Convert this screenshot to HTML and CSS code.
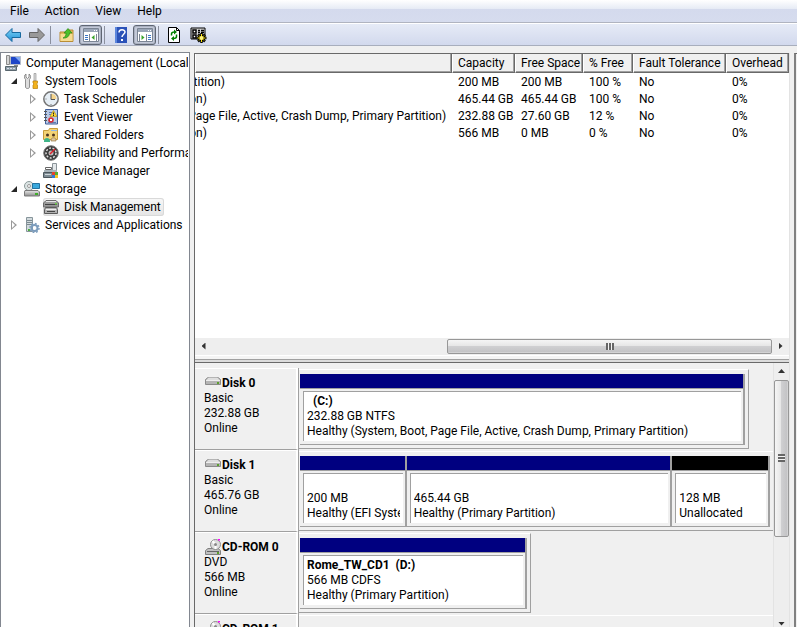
FILE: index.html
```
<!DOCTYPE html>
<html lang="en">

<head>
    <meta charset="UTF-8">
    <meta name="viewport" content="width=device-width, initial-scale=1.0">
    <title>Computer Management</title>
    <link rel="stylesheet" href="styles.css">
</head>

<body>
    <!-- shared icons -->
    <svg class="defs" width="0" height="0">
        <defs>
            <linearGradient id="blue" x1="0" y1="0" x2="0" y2="1">
                <stop offset="0" stop-color="#7fd4f7" />
                <stop offset="1" stop-color="#1f8fd6" />
            </linearGradient>
            <linearGradient id="metal" x1="0" y1="0" x2="0" y2="1">
                <stop offset="0" stop-color="#e8e8e8" />
                <stop offset="1" stop-color="#8c8c8c" />
            </linearGradient>
            <symbol id="hdd" viewBox="0 0 16 16">
                <path d="M3 2.500h10l2.500 2v5h-15v-5z" fill="#b4b4b4" stroke="#8a8a8a" />
                <path d="M3.500 2.500h9l2 2.500h-13z" fill="#dedede" />
                <path d="M1 5.500h14" stroke="#eee" />
                <path d="M12 7h2v2h-2z" fill="#5aa02c" />
            </symbol>
            <symbol id="cdrom" viewBox="0 0 16 16">
                <path d="M3 9.500h10l2.500 2v4h-15v-4z" fill="#c0c0c0" stroke="#808080" />
                <path d="M2 12.500h12" stroke="#666" />
                <circle cx="10.500" cy="5.500" r="5" fill="#ddd" stroke="#8c8c8c" />
                <path d="M10.500 5.500l-3-3.500M10.500 5.500v4.500" stroke="#fff" stroke-width="2" />
                <circle cx="10.500" cy="5.500" r="1.500" fill="#888" />
                <path d="M13 0h2v1.500h-2z" fill="#f0f" />
                <path d="M12 13h2v2h-2z" fill="#5aa02c" />
            </symbol>
        </defs>
    </svg>

    <nav class="menubar">
        <button>File</button>
        <button>Action</button>
        <button>View</button>
        <button>Help</button>
    </nav>

    <div class="toolbar">
        <button aria-label="Back">
            <svg width="16" height="16" viewBox="0 0 16 16"><path d="M.5 8L7 1.500v4h8.500v5H7v4z" fill="url(#blue)" stroke="#17699f" /></svg>
        </button>
        <button aria-label="Forward">
            <svg width="16" height="16" viewBox="0 0 16 16"><path d="M15.500 8L9 1.500v4H.5v5H9v4z" fill="#999" stroke="#666" /></svg>
        </button>
        <span class="sep"></span>
        <button aria-label="Up one level">
            <svg width="16" height="16" viewBox="0 0 16 16">
                <path d="M1 5h6l1-2h6v11.500H1z" fill="#e3bb63" stroke="#b98d35" />
                <path d="M1.500 7h12v7h-12z" fill="#f6dc92" />
                <path d="M4 11c2.500-1 3-2.500 3-5H5L9 1.500 13 6h-2.500C10.500 9 8 11.500 4 11z" fill="#4cc02c" stroke="#2a8a16" stroke-width=".7" />
            </svg>
        </button>
        <button class="pressed" aria-label="Show console tree">
            <svg width="16" height="16" viewBox="0 0 16 16">
                <path d="M.5 1.500h15v13H.5z" fill="#fff" stroke="#7b8594" />
                <path d="M1 2h14v3H1z" fill="#9aa6b8" />
                <path d="M11 3.500h1M13 3.500h1M1 6.500h14" stroke="#fff" />
                <path d="M2 8.500h3M2 10.500h3M2 12.500h3" stroke="#3c78c8" />
                <path d="M6.500 7v7M13.500 7v7" stroke="#7b8594" />
                <path d="M11.500 8v5L8.500 10.500z" fill="#3aa52a" />
            </svg>
        </button>
        <span class="sep"></span>
        <button aria-label="Help">
            <svg width="16" height="16" viewBox="0 0 16 16">
                <path d="M2 0h12v16H2z" fill="#2b52b8" />
                <path d="M2 0h2v16H2z" fill="#5c86dc" />
                <path d="M6 5.500C6 1.800 12 2 12 5c0 2-3 2.500-3 5" fill="none" stroke="#fff" stroke-width="1.500" />
                <path d="M8 12h2v2H8z" fill="#fff" />
            </svg>
        </button>
        <button class="pressed" aria-label="Show action pane">
            <svg width="16" height="16" viewBox="0 0 16 16">
                <path d="M.5 1.500h15v13H.5z" fill="#fff" stroke="#7b8594" />
                <path d="M1 2h14v3H1z" fill="#9aa6b8" />
                <path d="M11 3.500h1M13 3.500h1M1 6.500h14" stroke="#fff" />
                <path d="M11 8.500h3M11 10.500h3M11 12.500h3" stroke="#3c78c8" />
                <path d="M9.500 7v7M2.500 7v7" stroke="#7b8594" />
                <path d="M4.500 8v5l3-2.500z" fill="#3aa52a" />
            </svg>
        </button>
        <span class="sep"></span>
        <button aria-label="Refresh">
            <svg width="16" height="16" viewBox="0 0 16 16">
                <path d="M1.500.5h8l3 3v12h-11z" fill="#fff" stroke="#000" />
                <path d="M9.500.5v3h3" fill="none" stroke="#000" />
                <path d="M4.500 8.500V7c0-1 1-2 3-2M9.500 7.500V9.500c0 1-1 2-3 2" fill="none" stroke="#008000" stroke-width="1.500" />
                <path d="M7 2.500v5L10 5zM7 9v5l-3-2.500z" fill="#008000" />
            </svg>
        </button>
        <button aria-label="Properties">
            <svg width="17" height="16" viewBox="0 0 17 16">
                <path d="M1 1h14v11H1z" fill="#d8d8d8" stroke="#000" />
                <path d="M3 3h3v3H3zM3 8h3v3H3z" fill="#fff" stroke="#000" stroke-width="1.500" />
                <path d="M8 3.500h2M11 3.500h3M8 5.500h2M11 5.500h3M8 8.500h2" stroke="#000" stroke-width="1.500" />
                <path d="M11.500 6v10M6.500 11h10M8 7.500l7 7M15 7.500l-7 7" stroke="#000" stroke-width="2.500" />
                <path d="M11.500 7v8M7.500 11h8M9 8.500l5 5M14 8.500l-5 5" stroke="#ffe600" />
                <circle cx="11.500" cy="11" r="2" fill="#fff27a" />
            </svg>
        </button>
    </div>

    <main class="workspace">
        <aside class="tree">
            <ul>
                <li class="node root">
                    <svg width="16" height="16" viewBox="0 0 16 16">
                        <path d="M5.500 1.500h10v8h-10z" fill="#1e46c8" stroke="#b4bccb" />
                        <path d="M10 2h5v5z" fill="#7fa8f2" />
                        <path d="M9 10h4v2H9z" fill="#8c8c8c" />
                        <path d="M1.500.5h3v9h-3z" fill="#d4d4d4" stroke="#8a8a8a" />
                        <path d="M.5 11.500h11v4H.5z" fill="#8fa0a8" stroke="#59666e" />
                        <path d="M2 13.500h8" stroke="#dde" stroke-dasharray="2 1" />
                    </svg>
                    <span>Computer Management (Local</span>
                </li>
                <li class="node level1">
                    <button class="twisty open" aria-label="Collapse"></button>
                    <svg width="16" height="16" viewBox="0 0 16 16">
                        <path d="M2 1v3l1.500 1.500L5 4V1c2 1 2 4 .5 5.500V14c0 2-4 2-4 0V6.500C0 5 0 2 2 1z" fill="#ddd" stroke="#777" stroke-width=".8" />
                        <path d="M10 .5h2V8h-2z" fill="#ddd" stroke="#888" stroke-width=".6" />
                        <path d="M9 8h4.500v2l-1 1 1 1v3.500H9V12l1-1-1-1z" fill="#f2b21c" stroke="#b9800a" stroke-width=".7" />
                    </svg>
                    <span>System Tools</span>
                </li>
                <li class="node level2">
                    <button class="twisty" aria-label="Expand"></button>
                    <svg width="16" height="16" viewBox="0 0 16 16">
                        <circle cx="8" cy="8" r="7.200" fill="#e6eef5" stroke="#747474" stroke-width="1.500" />
                        <path d="M8 8V2.500A5.500 5.500 0 0 1 13.500 8z" fill="#f5d48c" />
                        <path d="M8 3v5.500h4" fill="none" stroke="#555" />
                        <path d="M8 13v1M2.500 8h1" stroke="#777" />
                    </svg>
                    <span>Task Scheduler</span>
                </li>
                <li class="node level2">
                    <button class="twisty" aria-label="Expand"></button>
                    <svg width="16" height="16" viewBox="0 0 16 16">
                        <path d="M2.500.5h12v14.500h-12z" fill="#b8c8e4" stroke="#3f5f9a" />
                        <path d="M1 2.500h3M1 5.500h3M1 8.500h3M1 11.500h3" stroke="#555" />
                        <path d="M6 3.500h3M6 5.500h2M5 13.500h8" stroke="#5c7cb4" />
                        <path d="M10.500 1.500l3.500 6h-7z" fill="#ffd832" stroke="#b08a00" stroke-width=".6" />
                        <path d="M10.500 3.500v2M10.500 6v1" stroke="#222" />
                        <circle cx="8" cy="11" r="2.800" fill="#d9303a" />
                        <path d="M7 10l2 2M9 10l-2 2" stroke="#fff" />
                    </svg>
                    <span>Event Viewer</span>
                </li>
                <li class="node level2">
                    <button class="twisty" aria-label="Expand"></button>
                    <svg width="16" height="16" viewBox="0 0 16 16">
                        <path d="M.5 3.500h5l1-2h8v11H.5z" fill="#f3d375" stroke="#c79c3b" />
                        <path d="M8 3.500h6" stroke="#8fb8e8" />
                        <path d="M3 8a1.500 1.500 0 1 1 3 0 1.500 1.500 0 1 1-3 0M9 8a1.500 1.500 0 1 1 3 0 1.500 1.500 0 1 1-3 0" fill="#4a3320" />
                        <path d="M1 14c0-4 6-4 6 0v1H1z" fill="#3fb488" />
                        <path d="M8 13c0-3 5-3 5 0v1H8z" fill="#e0c8a0" stroke="#8a6a30" stroke-width=".6" />
                    </svg>
                    <span>Shared Folders</span>
                </li>
                <li class="node level2">
                    <button class="twisty" aria-label="Expand"></button>
                    <svg width="16" height="16" viewBox="0 0 16 16">
                        <circle cx="8" cy="8" r="7.300" fill="#3a3a3a" stroke="#777" />
                        <circle cx="8" cy="8" r="5" fill="none" stroke="#ddd" stroke-width="1.500" stroke-dasharray="2 1.500" />
                        <circle cx="8" cy="8" r="2.500" fill="#bbb" />
                        <path d="M7 9l5-5" stroke="#e0202a" stroke-width="1.500" />
                    </svg>
                    <span>Reliability and Performa</span>
                </li>
                <li class="node level2">
                    <span class="twisty none"></span>
                    <svg width="16" height="16" viewBox="0 0 16 16">
                        <path d="M9.500.5h4v7h-4z" fill="#e4e8ea" stroke="#8b9499" />
                        <path d="M2.500 6.500h6v-2h-6z" fill="none" stroke="#666" />
                        <path d="M1 7h13v3H1z" fill="#a9b4ba" />
                        <path d="M.5 9.500h14v5H.5z" fill="#7d8b93" stroke="#4d585e" />
                        <path d="M2 11.500h6" stroke="#cfd6da" />
                        <path d="M9 9h3v3H9z" fill="#e8432c" />
                        <path d="M12 9h3v3h-3z" fill="#54b030" />
                        <path d="M9 12h3v3H9z" fill="#2f78d8" />
                        <path d="M12 12h3v3h-3z" fill="#f6c523" />
                    </svg>
                    <span>Device Manager</span>
                </li>
                <li class="node level1">
                    <button class="twisty open" aria-label="Collapse"></button>
                    <svg width="16" height="16" viewBox="0 0 16 16">
                        <circle cx="5" cy="5" r="4.500" fill="#dce4e4" stroke="#8c9a9a" />
                        <circle cx="5" cy="5" r="1.500" fill="#fff" stroke="#999" />
                        <path d="M8.500 2.500h7v5h-7z" fill="#39a8dc" stroke="#2472a0" />
                        <path d="M1 9.500h13l1.500 1.500v4H.5v-4z" fill="url(#metal)" stroke="#7a7a7a" />
                        <path d="M11 12h3v2h-3z" fill="#3fae2a" />
                    </svg>
                    <span>Storage</span>
                </li>
                <li class="node level2 selected">
                    <span class="twisty none"></span>
                    <a href="#disk-management">
                        <svg width="16" height="16" viewBox="0 0 16 16">
                            <path d="M3 1.500h10l2.500 2.500v4h-15V4z" fill="#9a9a9a" stroke="#6a6a6a" />
                            <path d="M3 2.500h10" stroke="#e4e4e4" />
                            <path d="M2 5.500h12" stroke="#444" />
                            <path d="M12 4h2v1.500h-2z" fill="#6fd04a" />
                            <path d="M2.500 8.500h11l1 2v4h-13v-4z" fill="#b0b0b0" stroke="#5a5a5a" />
                            <path d="M3 10.500h10" stroke="#f0f0f0" />
                            <path d="M4 12.500h8" stroke="#444" />
                        </svg>
                        <span>Disk Management</span>
                    </a>
                </li>
                <li class="node level1">
                    <button class="twisty" aria-label="Expand"></button>
                    <svg width="16" height="16" viewBox="0 0 16 16">
                        <path d="M2.500.5h6v14h-6z" fill="#d2dadd" stroke="#87959b" />
                        <path d="M3 3.500h5M3 5.500h5M3 7.500h5" stroke="#7c8a91" />
                        <path d="M4 12h2v2H4z" fill="#4cae3a" />
                        <circle cx="10.500" cy="11" r="3" fill="none" stroke="#7c9cbc" stroke-width="2" />
                        <circle cx="10.500" cy="11" r="4.500" fill="none" stroke="#7c9cbc" stroke-width="1.500" stroke-dasharray="1.800 1.700" />
                    </svg>
                    <span>Services and Applications</span>
                </li>
            </ul>
        </aside>

        <section class="content" id="disk-management">
            <div class="volumes">
                <table>
                    <colgroup>
                        <col>
                        <col class="w63">
                        <col class="w68">
                        <col class="w50">
                        <col class="w93">
                        <col class="w63">
                    </colgroup>
                    <thead>
                        <tr>
                            <th></th>
                            <th>Capacity</th>
                            <th>Free Space</th>
                            <th>% Free</th>
                            <th>Fault Tolerance</th>
                            <th>Overhead</th>
                        </tr>
                    </thead>
                    <tbody>
                        <tr>
                            <td><span>Healthy (EFI System Partition)</span></td>
                            <td>200 MB</td>
                            <td>200 MB</td>
                            <td>100 %</td>
                            <td>No</td>
                            <td>0%</td>
                        </tr>
                        <tr>
                            <td><span>Healthy (Primary Partition)</span></td>
                            <td>465.44 GB</td>
                            <td>465.44 GB</td>
                            <td>100 %</td>
                            <td>No</td>
                            <td>0%</td>
                        </tr>
                        <tr>
                            <td><span>Healthy (System, Boot, Page File, Active, Crash Dump, Primary Partition)</span></td>
                            <td>232.88 GB</td>
                            <td>27.60 GB</td>
                            <td>12 %</td>
                            <td>No</td>
                            <td>0%</td>
                        </tr>
                        <tr>
                            <td><span>Healthy (Primary Partition)</span></td>
                            <td>566 MB</td>
                            <td>0 MB</td>
                            <td>0 %</td>
                            <td>No</td>
                            <td>0%</td>
                        </tr>
                    </tbody>
                </table>
                <div class="scrollbar horizontal">
                    <button aria-label="Scroll left"><i class="arrow left"></i></button>
                    <div class="track">
                        <div class="thumb"><i class="grip"></i></div>
                    </div>
                    <button aria-label="Scroll right"><i class="arrow right"></i></button>
                </div>
            </div>

            <div class="disks">
                <div class="disk-list">
                    <div class="disk">
                        <div class="disk-label">
                            <h2><svg width="16" height="16"><use href="#hdd" /></svg>Disk 0</h2>
                            <p>Basic</p>
                            <p>232.88 GB</p>
                            <p>Online</p>
                        </div>
                        <div class="disk-area">
                            <div class="frame" style="width: 95%">
                                <div class="partition" style="flex-grow: 1">
                                    <div class="info">
                                        <h3>&nbsp; (C:)</h3>
                                        <p>232.88 GB NTFS</p>
                                        <p>Healthy (System, Boot, Page File, Active, Crash Dump, Primary Partition)</p>
                                    </div>
                                </div>
                            </div>
                        </div>
                    </div>
                    <div class="disk">
                        <div class="disk-label">
                            <h2><svg width="16" height="16"><use href="#hdd" /></svg>Disk 1</h2>
                            <p>Basic</p>
                            <p>465.76 GB</p>
                            <p>Online</p>
                        </div>
                        <div class="disk-area">
                            <div class="frame full">
                                <div class="partition" style="flex-grow: 106">
                                    <div class="info">
                                        <h3></h3>
                                        <p>200 MB</p>
                                        <p>Healthy (EFI System Partition)</p>
                                    </div>
                                </div>
                                <div class="partition" style="flex-grow: 267">
                                    <div class="info">
                                        <h3></h3>
                                        <p>465.44 GB</p>
                                        <p>Healthy (Primary Partition)</p>
                                    </div>
                                </div>
                                <div class="partition unallocated" style="flex-grow: 97">
                                    <div class="info">
                                        <h3></h3>
                                        <p>128 MB</p>
                                        <p>Unallocated</p>
                                    </div>
                                </div>
                            </div>
                        </div>
                    </div>
                    <div class="disk">
                        <div class="disk-label">
                            <h2><svg width="16" height="16"><use href="#cdrom" /></svg>CD-ROM 0</h2>
                            <p>DVD</p>
                            <p>566 MB</p>
                            <p>Online</p>
                        </div>
                        <div class="disk-area">
                            <div class="frame" style="width: 49%">
                                <div class="partition" style="flex-grow: 1">
                                    <div class="info">
                                        <h3>Rome_TW_CD1 &nbsp;(D:)</h3>
                                        <p>566 MB CDFS</p>
                                        <p>Healthy (Primary Partition)</p>
                                    </div>
                                </div>
                            </div>
                        </div>
                    </div>
                    <div class="disk">
                        <div class="disk-label">
                            <h2><svg width="16" height="16"><use href="#cdrom" /></svg>CD-ROM 1</h2>
                        </div>
                        <div class="disk-area">
                            <div class="frame full"></div>
                        </div>
                    </div>
                </div>
                <div class="scrollbar vertical">
                    <button aria-label="Scroll up"><i class="arrow up"></i></button>
                    <div class="track">
                        <div class="thumb"><i class="grip"></i></div>
                    </div>
                    <button aria-label="Scroll down"><i class="arrow down"></i></button>
                </div>
            </div>
        </section>

        <aside class="actions"></aside>
    </main>
</body>

</html>
```
FILE: styles.css
```
* {
    margin: 0;
    padding: 0;
    box-sizing: border-box;
}

body {
    display: flex;
    flex-direction: column;
    height: 100vh;
    overflow: hidden;
    background-color: #f0f0f0;
    color: #000;
    font-family: Roboto, sans-serif;
    font-size: 12px;
    line-height: 15px;
}

button {
    border: none;
    background: none;
    font: inherit;
    color: inherit;
}

ul {
    list-style: none;
}

svg {
    display: block;
    flex: none;
}

.defs {
    position: absolute;
}

/* menu and toolbar */
.menubar {
    display: flex;
    flex: none;
    height: 23px;
    padding-left: 2px;
    border-bottom: 1px solid #b0b4c0;
    background: linear-gradient(#fff, #e6ebf5 40%, #d4daed 41%, #d6dcee);
}

.menubar button {
    padding: 0 8px;
}

.toolbar {
    display: flex;
    flex: none;
    align-items: center;
    gap: 1px;
    height: 23px;
    padding-left: 1px;
    border-top: 1px solid #fff;
    border-bottom: 1px solid #a8aebd;
    background: linear-gradient(#e6ebf7, #d2d9ed);
}

.toolbar button {
    display: flex;
    align-items: center;
    justify-content: center;
    width: 23px;
    height: 20px;
}

.toolbar .pressed {
    border: 1px solid #5f6673;
    border-radius: 3px;
    background-color: #c3c9d8;
    box-shadow: inset 0 0 0 1px #a9b0c0;
}

.sep {
    width: 1px;
    height: 18px;
    margin: 0 3px 0 1px;
    background-color: #8b909e;
}

.workspace {
    display: flex;
    flex: 1;
    min-height: 0;
    padding-top: 6px;
}

/* console tree */
.tree {
    flex: none;
    width: 190px;
    padding: 1px 1px 0 0;
    overflow: hidden;
    border: 1px solid #828790;
    border-bottom: none;
    background-color: #fff;
}

.node {
    display: flex;
    align-items: center;
    height: 18px;
    overflow: hidden;
    white-space: nowrap;
}

.node svg {
    margin-right: 5px;
}

.root {
    padding-left: 4px;
}

.level1 {
    padding-left: 7px;
}

.level2 {
    padding-left: 26px;
}

.twisty {
    flex: none;
    width: 12px;
    height: 12px;
    margin-right: 4px;
    background-color: #999;
    clip-path: path(evenodd, "M3 1L9 6L3 11ZM4 3V9L7 6Z");
}

.twisty.open {
    background-color: #262626;
    clip-path: polygon(9px 3px, 9px 9px, 3px 9px);
}

.twisty.none {
    visibility: hidden;
}

.selected a {
    display: flex;
    align-items: center;
    height: 18px;
    padding-right: 3px;
    border-radius: 3px;
    background: linear-gradient(#f8f8f8, #e5e5e5);
    box-shadow: inset 0 0 0 1px #d9d9d9;
    color: inherit;
    text-decoration: none;
}

/* content */
.content {
    display: flex;
    flex: 1;
    flex-direction: column;
    min-width: 0;
    margin: 1px 4px 0 4px;
    border-left: 1px solid #696969;
    border-right: 1px solid #e3e3e3;
}

.volumes {
    display: flex;
    flex: 300;
    flex-direction: column;
    min-height: 0;
    padding-bottom: 7px;
    border-top: 1px solid #696969;
    border-bottom: 1px solid #696969;
    background-color: #fff;
    box-shadow: inset 0 -2px #dcdcdc, inset 0 -3px #a0a0a0, inset 0 -6px #f4f4f4;
}

.volumes table {
    width: 100%;
    table-layout: fixed;
    border-collapse: separate;
    border-spacing: 0;
}

.w50 { width: 50px; }
.w63 { width: 63px; }
.w68 { width: 68px; }
.w93 { width: 93px; }

.volumes th {
    height: 19px;
    padding: 1px 0 0 5px;
    border-left: 1px solid #fff;
    border-right: 1px solid #696969;
    border-bottom: 1px solid #696969;
    background-color: #f0f0f0;
    box-shadow: inset -1px -1px #a0a0a0;
    font-weight: normal;
    text-align: left;
    white-space: nowrap;
}

.volumes td {
    height: 17px;
    padding: 2px 0 0 6px;
    overflow: hidden;
    white-space: nowrap;
}

/* the status column is scrolled part of the way out of view */
.volumes td:first-child {
    padding-left: 0;
}

.volumes td span {
    display: block;
    margin-left: -130px;
}

/* scrollbars */
.scrollbar {
    display: flex;
    flex: none;
    background-color: #eee;
}

.scrollbar button {
    display: flex;
    flex: none;
    align-items: center;
    justify-content: center;
    width: 17px;
    height: 17px;
}

.track {
    display: flex;
    flex: 1;
    min-height: 0;
}

.thumb {
    display: flex;
    align-items: center;
    justify-content: center;
    border: 1px solid #979797;
    border-radius: 2px;
}

.horizontal {
    height: 17px;
    margin-top: auto;
}

.horizontal .track {
    justify-content: flex-end;
    padding: 1px 0;
}

.horizontal .thumb {
    width: 58%;
    background: linear-gradient(#f5f5f5, #e6e6e6 45%, #cfcfd1 50%, #c4c4c6 90%, #dcdcdc);
}

.horizontal .grip {
    width: 8px;
    height: 7px;
    background: repeating-linear-gradient(90deg, #666 0 2px, #f4f4f4 2px 3px);
}

/* runs on below the bottom of the window */
.vertical {
    flex-direction: column;
    width: 16px;
    margin-bottom: -5px;
    border-left: 1px solid #e3e3e3;
}

.vertical button {
    width: 15px;
}

.vertical .thumb {
    width: 15px;
    height: 67%;
    background: linear-gradient(90deg, #f5f5f5, #e6e6e6 45%, #cfcfd1 50%, #c4c4c6 90%, #dcdcdc);
}

.vertical .grip {
    width: 7px;
    height: 8px;
    background: repeating-linear-gradient(#666 0 2px, #f4f4f4 2px 3px);
}

.arrow {
    background-color: #333;
}

.left,
.right {
    width: 4px;
    height: 7px;
}

.up,
.down {
    width: 7px;
    height: 4px;
}

.left { clip-path: polygon(100% 0, 100% 100%, 0 50%); }
.right { clip-path: polygon(0 0, 100% 50%, 0 100%); }
.up { clip-path: polygon(50% 0, 100% 100%, 0 100%); }
.down { clip-path: polygon(0 0, 100% 0, 50% 100%); }

/* graphical disk list */
.disks {
    display: flex;
    flex: 264;
    min-height: 0;
}

.disk-list {
    flex: 1;
    min-width: 0;
    padding-top: 5px;
    overflow: hidden;
}

.disk {
    display: flex;
    height: 82px;
}

.disk-label {
    flex: none;
    width: 103px;
    padding: 7px 0 0 9px;
    border-top: 1px solid #fff;
    border-right: 2px solid #fff;
    border-bottom: 1px solid #a0a0a0;
}

h2,
h3 {
    height: 15px;
    font-size: 12px;
    font-weight: bold;
    line-height: 15px;
    white-space: nowrap;
}

h2 {
    display: flex;
    align-items: flex-end;
}

h2 svg {
    margin: 0 1px;
}

.disk-area {
    flex: 1;
    min-width: 0;
    padding: 1px 0;
    border-left: 1px solid #a0a0a0;
}

.frame {
    display: flex;
    height: 80px;
    padding: 4px 3px 3px 1px;
    border-top: 1px solid #fff;
    border-right: 1px solid #a0a0a0;
    border-bottom: 1px solid #a0a0a0;
}

.frame.full {
    border-right: none;
}

.partition {
    display: flex;
    flex: 1 1 0;
    flex-direction: column;
    min-width: 0;
    border-right: 2px solid #a0a0a0;
    border-bottom: 1px solid #a0a0a0;
}

.partition::before {
    content: "";
    height: 14px;
    border-bottom: 1px solid #a0a0a0;
    background-color: #000080;
}

.unallocated::before {
    background-color: #000;
}

.info {
    flex: 1;
    margin: 2px 2px 3px 3px;
    padding: 2px 3px 0 3px;
    border-top: 1px solid #a0a0a0;
    border-left: 1px solid #a0a0a0;
    background-color: #fff;
}

.info p {
    overflow: hidden;
    white-space: nowrap;
}

/* edge of the actions pane */
.actions {
    flex: none;
    width: 3px;
    margin-top: 1px;
    border-top: 1px solid #696969;
    border-left: 2px solid #808080;
}
```
